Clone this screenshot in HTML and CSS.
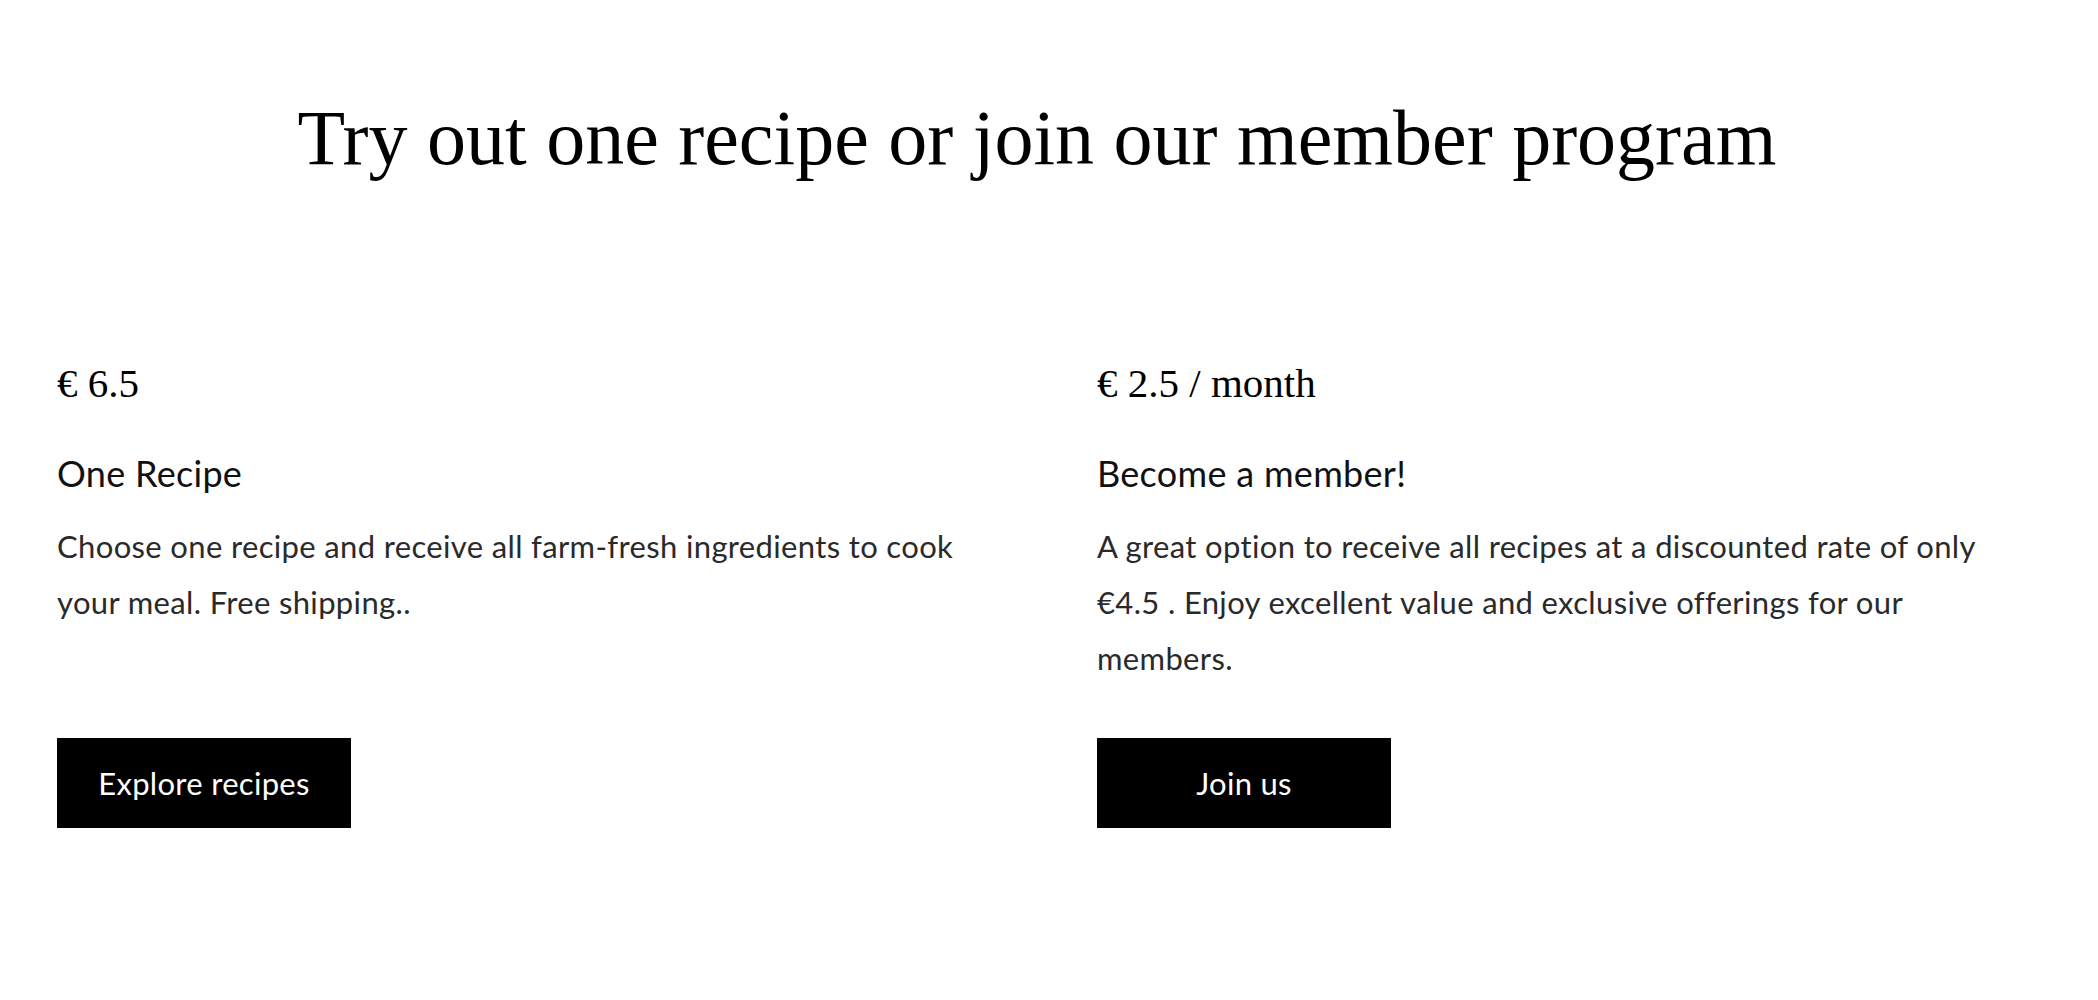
FILE: index.html
```html
<!DOCTYPE html>
<html lang="en">
<head>
<meta charset="utf-8">
<title>Pricing</title>
<link rel="stylesheet" href="styles.css">
</head>
<body>
<section class="pricing">
  <h1 class="pricing-title">Try out one recipe or join our member program</h1>
  <div class="plans">
    <div class="plan">
      <div class="plan-price">€ 6.5</div>
      <h2 class="plan-name">One Recipe</h2>
      <p class="plan-desc">Choose one recipe and receive all farm-fresh ingredients to cook your meal. Free shipping..</p>
      <a class="plan-btn" href="#">Explore recipes</a>
    </div>
    <div class="plan">
      <div class="plan-price">€ 2.5 / month</div>
      <h2 class="plan-name">Become a member!</h2>
      <p class="plan-desc">A great option to receive all recipes at a discounted rate of only €4.5 . Enjoy excellent value and exclusive offerings for our members.</p>
      <a class="plan-btn" href="#">Join us</a>
    </div>
  </div>
</section>
</body>
</html>
```
FILE: styles.css
```css
html, body {
  margin: 0;
  padding: 0;
  background: #ffffff;
}
body {
  font-family: "Lato", "Liberation Sans", sans-serif;
  color: #1e1e1e;
}
.pricing {
  padding: 90px 57px 0;
}
.pricing-title {
  margin: 0;
  padding-right: 24px;
  font-family: "Liberation Serif", serif;
  font-weight: normal;
  font-size: 78px;
  line-height: 96px;
  text-align: center;
  color: #000;
}
.plans {
  margin-top: 173px;
  display: grid;
  grid-template-columns: 1fr 1fr;
  column-gap: 96px;
}
.plan {
  display: flex;
  flex-direction: column;
  align-items: flex-start;
}
.plan-price {
  font-family: "Liberation Serif", serif;
  font-size: 41px;
  line-height: 48px;
  color: #000;
}
.plan-name {
  margin: 45px 0 0;
  font-weight: 400;
  font-size: 36px;
  line-height: 43px;
  letter-spacing: 0.3px;
  color: #111;
}
.plan-desc {
  margin: 23px 0 52px;
  font-size: 31px;
  font-weight: 400;
  line-height: 56px;
  letter-spacing: 0.35px;
  max-width: 920px;
  color: #2a2a2a;
}
.plan-btn {
  margin-top: auto;
  width: 294px;
  height: 90px;
  display: flex;
  align-items: center;
  justify-content: center;
  background: #000;
  color: #fff;
  text-decoration: none;
  font-size: 31px;
  letter-spacing: 0.3px;
}
```
